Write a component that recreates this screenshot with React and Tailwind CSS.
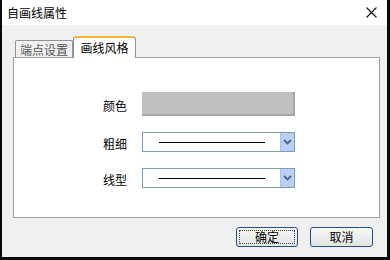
import React from "react";

const font = { fontFamily: '"Noto Sans CJK SC", "Noto Sans", sans-serif' };

// 下拉框（线条样式预览）
const LineCombo = () => (
    <div className="flex h-[20px] w-[153px] border border-[#7f9db9] bg-white">
        <div className="flex flex-1 items-center pl-[16px] pr-[14px]">
            <div className="h-[1px] w-[106px] bg-black" />
        </div>
        <div className="flex w-[14px] items-center justify-center border-l border-[#a9c3ea] bg-[#b9d1f6]">
            <svg width="9" height="6" viewBox="0 0 9 6">
                <path d="M1 1 L4.5 4.5 L8 1" fill="none" stroke="#4d6185" strokeWidth="1.8" />
            </svg>
        </div>
    </div>
);

const Row = ({ label, children }) => (
    <div className="flex items-center">
        <span className="w-[39px] pt-[3px] text-[12px] leading-[14px] text-black">{label}</span>
        {children}
    </div>
);

export default function App() {
    return (
        <div className="h-[260px] w-[390px] overflow-hidden bg-[#0a0a0a]" style={font}>
            <div className="ml-[2px] flex h-[257px] w-[385px] flex-col bg-[#f0f0f0]">
                {/* 标题栏 */}
                <div className="flex h-[25px] items-center justify-between bg-white pl-[5px] pr-[10px]">
                    <span className="text-[12px] leading-[14px] text-black">自画线属性</span>
                    <svg width="11" height="11" viewBox="0 0 11 11">
                        <path d="M0.5 0.5 L10.5 10.5 M10.5 0.5 L0.5 10.5" stroke="#111" strokeWidth="1.1" />
                    </svg>
                </div>

                {/* 选项卡 */}
                <div className="ml-[11px] mt-[11px] flex items-end">
                    <div className="mb-[-1px] ml-[2px] flex h-[18px] w-[58px] items-center justify-center rounded-t-[2px] border border-b-0 border-[#8e9399] bg-[#f0f0f0] text-[12px] text-[#555]">
                        端点设置
                    </div>
                    <div className="relative z-10 mb-[-1px] flex h-[22px] w-[63px] items-center justify-center rounded-t-[3px] border-x border-[#8e9399] border-t-2 border-t-[#f5b53a] bg-white pb-[1px] text-[12px] text-black">
                        画线风格
                    </div>
                </div>

                {/* 面板 */}
                <div className="ml-[11px] flex h-[161px] w-[367px] flex-col gap-[16px] border border-[#9aa0a6] bg-white pl-[89px] pt-[34px]">
                    <Row label="颜色">
                        <div className="h-[24px] w-[153px] border-b-2 border-r-2 border-b-[#a6a6a6] border-r-[#a6a6a6] bg-[#c0c0c0]" />
                    </Row>
                    <Row label="粗细">
                        <LineCombo />
                    </Row>
                    <Row label="线型">
                        <LineCombo />
                    </Row>
                </div>

                {/* 按钮 */}
                <div className="mr-[14px] mt-[9px] flex justify-end gap-[12px]">
                    <button className="flex h-[20px] w-[62px] items-center justify-center rounded-[3px] border border-[#1f4f8f] bg-gradient-to-b from-[#f7f7f7] to-[#e3e3e3] p-[2px] text-[12px] text-black">
                        <span className="flex h-full w-full items-center justify-center border border-dotted border-[#444]">确定</span>
                    </button>
                    <button className="flex h-[20px] w-[63px] items-center justify-center rounded-[3px] border border-[#1f4f8f] bg-gradient-to-b from-[#f7f7f7] to-[#e3e3e3] text-[12px] text-black">
                        取消
                    </button>
                </div>
            </div>
        </div>
    );
}
